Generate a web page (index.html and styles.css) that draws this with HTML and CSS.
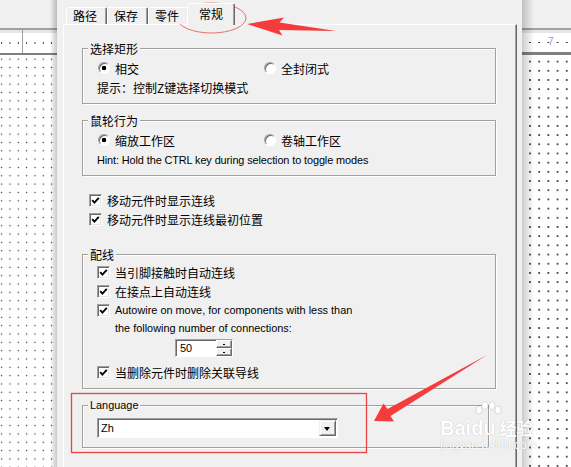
FILE: index.html
```html
<!DOCTYPE html>
<html lang="zh">
<head>
  <meta charset="UTF-8" />
  <meta name="viewport" content="width=device-width, initial-scale=1.0"/>
  <title>常规设置</title>
  <link rel="stylesheet" href="styles.css">
</head>
<body>
  <div class="screen">
    <div class="canvas canvas-left">
      <div class="canvas-head"></div>
      <div class="ruler"><span class="ruler-tick"></span></div>
      <div class="grid"></div>
    </div>

    <div class="dialog">
      <div class="tabs">
        <div class="tab">路径</div>
        <div class="tab">保存</div>
        <div class="tab">零件</div>
        <div class="tab active">常规</div>
      </div>

      <div class="panel">
        <fieldset class="group">
          <legend>选择矩形</legend>
          <div class="radio-row">
            <label class="option"><span class="radio checked"></span>相交</label>
            <label class="option"><span class="radio"></span>全封闭式</label>
          </div>
          <div class="hint">提示：控制Z键选择切换模式</div>
        </fieldset>

        <fieldset class="group group-wheel">
          <legend>鼠轮行为</legend>
          <div class="radio-row">
            <label class="option"><span class="radio checked"></span>缩放工作区</label>
            <label class="option"><span class="radio"></span>卷轴工作区</label>
          </div>
          <div class="hint latin hint-en">Hint: Hold the CTRL key during selection to toggle modes</div>
        </fieldset>

        <div class="checks">
          <label class="check-row">
            <span class="checkbox"><svg width="9" height="9" viewBox="0 0 9 9"><path d="M1.2 4.2 L3.4 6.6 L7.8 1.8" /></svg></span>
            移动元件时显示连线
          </label>
          <label class="check-row">
            <span class="checkbox"><svg width="9" height="9" viewBox="0 0 9 9"><path d="M1.2 4.2 L3.4 6.6 L7.8 1.8" /></svg></span>
            移动元件时显示连线最初位置
          </label>
        </div>

        <fieldset class="group group-wire">
          <legend>配线</legend>
          <label class="check-row">
            <span class="checkbox"><svg width="9" height="9" viewBox="0 0 9 9"><path d="M1.2 4.2 L3.4 6.6 L7.8 1.8" /></svg></span>
            当引脚接触时自动连线
          </label>
          <label class="check-row">
            <span class="checkbox"><svg width="9" height="9" viewBox="0 0 9 9"><path d="M1.2 4.2 L3.4 6.6 L7.8 1.8" /></svg></span>
            在接点上自动连线
          </label>
          <label class="check-row multi">
            <span class="checkbox"><svg width="9" height="9" viewBox="0 0 9 9"><path d="M1.2 4.2 L3.4 6.6 L7.8 1.8" /></svg></span>
            <span class="latin multi-text">Autowire on move, for components with less than<br>the following number of connections:</span>
          </label>
          <div class="spin">
            <span class="spin-field latin">50</span>
            <span class="spin-buttons">
              <span class="spin-btn"></span>
              <span class="spin-btn"></span>
            </span>
          </div>
          <label class="check-row last">
            <span class="checkbox"><svg width="9" height="9" viewBox="0 0 9 9"><path d="M1.2 4.2 L3.4 6.6 L7.8 1.8" /></svg></span>
            当删除元件时删除关联导线
          </label>
        </fieldset>

        <fieldset class="group group-lang">
          <legend class="latin">Language</legend>
          <div class="combo">
            <span class="combo-value latin">Zh</span>
            <span class="combo-button"></span>
          </div>
        </fieldset>
      </div>
    </div>

    <div class="canvas canvas-right">
      <div class="canvas-head"></div>
      <div class="ruler"><span class="ruler-num">7</span></div>
      <div class="grid"></div>
    </div>

    <!-- red marks drawn over the screenshot -->
    <svg class="annotations" width="571" height="467" viewBox="0 0 571 467">
      <ellipse cx="211.5" cy="18" rx="34.5" ry="15" fill="none" stroke="#e8706e" stroke-width="1"/>
      <polygon points="247,24 284,17.5 279.5,22.5 336,31 279,30 282.5,35.5" fill="#f53c3c"/>
      <rect x="71.5" y="393.5" width="295" height="59" fill="none" stroke="#ea4343" stroke-width="1.3"/>
      <polygon points="374,421 383.5,403.5 387.5,409 487,355 390.5,416 394,421.5" fill="#f53c3c"/>
    </svg>

    <div class="watermark">
      <svg class="paw" width="30" height="20" viewBox="0 0 30 20">
        <ellipse cx="6" cy="9" rx="3" ry="4"/>
        <ellipse cx="12" cy="4.5" rx="3" ry="4"/>
        <ellipse cx="19" cy="4.5" rx="3" ry="4"/>
        <ellipse cx="25" cy="9" rx="3" ry="4"/>
      </svg>
      <div class="wm-main">Bai<span class="wm-du">du</span><span class="wm-cn">经验</span></div>
      <div class="wm-url">jingyan.baidu.com</div>
    </div>
  </div>
</body>
</html>
```

FILE: styles.css
```css
* {
  box-sizing: border-box;
}

html, body {
  margin: 0;
  padding: 0;
}

body {
  width: 571px;
  height: 467px;
  overflow: hidden;
  background: #f0f0f0;
  font-family: "Noto Sans CJK SC", "Noto Sans", sans-serif;
  font-size: 12px;
  color: #000;
}

.latin {
  font-family: "Liberation Sans", Arial, sans-serif;
  font-size: 10.9px;
}

.screen {
  position: relative;
  display: grid;
  grid-template-columns: 57px 465px 49px;
  height: 467px;
  overflow: hidden;
}

/* drawing canvas on both sides of the dialog */
.canvas {
  position: relative;
  display: flex;
  flex-direction: column;
  background: #fff;
  overflow: hidden;
}

.canvas-head {
  height: 28px;
  background: #f0f0f0;
}

.ruler {
  display: flex;
  height: 27px;
  border-top: 2px solid #a0a0a0;
  border-bottom: 2px solid #808080;
  background-color: #fff;
  background-image: radial-gradient(circle, #333 0 0.6px, transparent 1px);
  background-repeat: repeat-x;
  box-shadow: inset 0 3px 0 #e6e6e6;
}

.canvas-left .ruler {
  background-size: 8.33px 8.33px;
  background-position: 5.8px 8.6px;
}

.canvas-right .ruler {
  background-size: 9.2px 9.2px;
  background-position: 3.4px 8.4px;
  border-bottom-width: 3px;
}

.ruler-tick {
  width: 1px;
  margin-left: 22px;
  background: #a0a0a0;
}

.ruler-num {
  margin: 7px 0 0 26px;
  font-family: "Liberation Sans", Arial, sans-serif;
  font-size: 10px;
  line-height: 10px;
  color: #8ea2c4;
}

.grid {
  flex: 1;
  background-image: radial-gradient(circle, #333 0 0.6px, transparent 1px);
}

.canvas-left .grid {
  background-size: 8.33px 8.33px;
  background-position: 5.8px 0;
}

.canvas-right .grid {
  background-size: 9.2px 9.2px;
  background-position: 3.4px 2px;
}

.canvas-left::after,
.canvas-right::after {
  content: "";
  position: absolute;
  top: 0;
  bottom: 0;
}

.canvas-left::after {
  right: 0;
  width: 7px;
  background: linear-gradient(to right, rgba(0, 0, 0, 0), rgba(0, 0, 0, 0.22));
}

.canvas-right::after {
  left: 0;
  width: 12px;
  background: linear-gradient(to left, rgba(0, 0, 0, 0), rgba(0, 0, 0, 0.2));
}

/* property dialog */
.dialog {
  padding: 3px 5px 0 6px;
  background: #f0f0f0;
}

.tabs {
  position: relative;
  z-index: 1;
  display: flex;
  align-items: flex-end;
  height: 22px;
  margin-bottom: -1px;
  padding-left: 3px;
}

.tab {
  position: relative;
  width: 41px;
  height: 17px;
  margin-bottom: 1px;
  padding-left: 6px;
  line-height: 15px;
  border: 1px solid;
  border-bottom: 0;
  border-color: #fff #696969 transparent #fff;
  border-radius: 2px 2px 0 0;
  box-shadow: inset -1px 0 0 #a0a0a0;
  background: #f0f0f0;
  white-space: nowrap;
}

.tab.active {
  z-index: 1;
  width: 48px;
  height: 22px;
  margin: 0 0 0 -2px;
  padding: 1px 0 0 11px;
  line-height: 18px;
}

.panel {
  height: 460px;
  padding: 17px 0 0 18px;
  border: 1px solid;
  border-color: #fff #696969 #696969 #fff;
  box-shadow: inset -1px 0 0 #a0a0a0;
}

.group {
  width: 414px;
  min-width: 0;
  margin: 0;
  padding: 3px 0 5px 14px;
  border: 1px solid #a0a0a0;
  box-shadow: inset 1px 1px 0 #fff, 1px 1px 0 #fff;
}

.group legend {
  margin-left: -9px;
  padding: 0 2px;
  line-height: 13px;
  background: #f0f0f0;
}

.group-wheel {
  margin-top: 10px;
}

.radio-row {
  display: grid;
  grid-template-columns: 166px auto;
  align-items: center;
  height: 20px;
  padding-left: 1px;
}

.option {
  display: flex;
  align-items: center;
  gap: 5px;
}

.radio {
  width: 12px;
  height: 12px;
  border-radius: 50%;
  border: 1px solid;
  border-color: #a0a0a0 #fff #fff #a0a0a0;
  box-shadow: inset 1px 1px 0 #696969;
  background: #fff;
}

.radio.checked {
  background: radial-gradient(circle, #000 0 2px, #fff 2.6px);
}

.hint {
  height: 20px;
  line-height: 20px;
  white-space: nowrap;
}

.hint-en {
  letter-spacing: -0.1px;
}

.checks {
  margin: 15px 0 0 7px;
}

.check-row {
  display: flex;
  align-items: center;
  gap: 5px;
  height: 19px;
  white-space: nowrap;
}

.checkbox {
  display: flex;
  align-items: center;
  justify-content: center;
  flex: none;
  width: 13px;
  height: 13px;
  border: 1px solid;
  border-color: #a0a0a0 #fff #fff #a0a0a0;
  box-shadow: inset 1px 1px 0 #696969, inset -1px -1px 0 #e3e3e3;
  background: #fff;
}

.checkbox path {
  fill: none;
  stroke: #000;
  stroke-width: 1.9;
}

.group-wire {
  margin-top: 19px;
  padding: 2px 0 6px 14px;
}

.check-row.multi {
  align-items: flex-start;
  height: 36px;
}

.check-row.multi .checkbox {
  margin-top: 3px;
}

.multi-text {
  line-height: 18px;
}

.spin {
  display: flex;
  width: 58px;
  height: 18px;
  margin: 2px 0 0 78px;
  border: 1px solid;
  border-color: #a0a0a0 #fff #fff #a0a0a0;
  box-shadow: inset 1px 1px 0 #696969;
  background: #fff;
}

.spin-field {
  flex: 1;
  padding: 1px 0 0 4px;
  line-height: 15px;
}

.spin-buttons {
  display: flex;
  flex-direction: column;
  width: 16px;
}

.spin-btn {
  position: relative;
  flex: 1;
  border: 1px solid;
  border-color: #fff #696969 #696969 #fff;
  box-shadow: inset -1px -1px 0 #a0a0a0;
  background: #f0f0f0;
}

.spin-btn::after {
  content: "";
  position: absolute;
  left: 6px;
  top: 3px;
  width: 2px;
  height: 1px;
  background: #000;
}

.check-row.last {
  margin-top: 6px;
}

.group-lang {
  width: 407px;
  margin-top: 10px;
  padding: 6px 0 9px 14px;
}

.combo {
  display: flex;
  width: 241px;
  height: 20px;
  border: 1px solid;
  border-color: #a0a0a0 #fff #fff #a0a0a0;
  box-shadow: inset 1px 1px 0 #696969;
  background: #fff;
}

.combo-value {
  flex: 1;
  padding: 2px 0 0 3px;
  line-height: 15px;
}

.combo-button {
  position: relative;
  width: 17px;
  margin: 1px 1px 1px 0;
  border: 1px solid;
  border-color: #f0f0f0 #696969 #696969 #f0f0f0;
  box-shadow: inset 1px 1px 0 #fff, inset -1px -1px 0 #a0a0a0;
  background: #f0f0f0;
}

.combo-button::after {
  content: "";
  position: absolute;
  left: 4px;
  top: 6px;
  border-left: 3.5px solid transparent;
  border-right: 3.5px solid transparent;
  border-top: 4px solid #000;
}

/* annotations and watermark on top of the screenshot */
.annotations {
  position: absolute;
  left: 0;
  top: 0;
  pointer-events: none;
}

.watermark {
  position: absolute;
  left: 440px;
  top: 401px;
  width: 110px;
  color: #fff;
  text-shadow: 0 0 1px rgba(0, 0, 0, 0.28);
  pointer-events: none;
}

.paw {
  display: block;
  margin-left: 33px;
  fill: #fff;
  stroke: rgba(0, 0, 0, 0.12);
}

.wm-main {
  margin-top: -3px;
  font-family: "Liberation Sans", Arial, sans-serif;
  font-size: 20px;
  font-weight: bold;
  line-height: 20px;
  white-space: nowrap;
}

.wm-cn {
  margin-left: 4px;
  font-family: "Noto Sans CJK SC", sans-serif;
  font-size: 17px;
}

.wm-url {
  font-family: "Liberation Sans", Arial, sans-serif;
  font-size: 12px;
  line-height: 14px;
  white-space: nowrap;
}
```
